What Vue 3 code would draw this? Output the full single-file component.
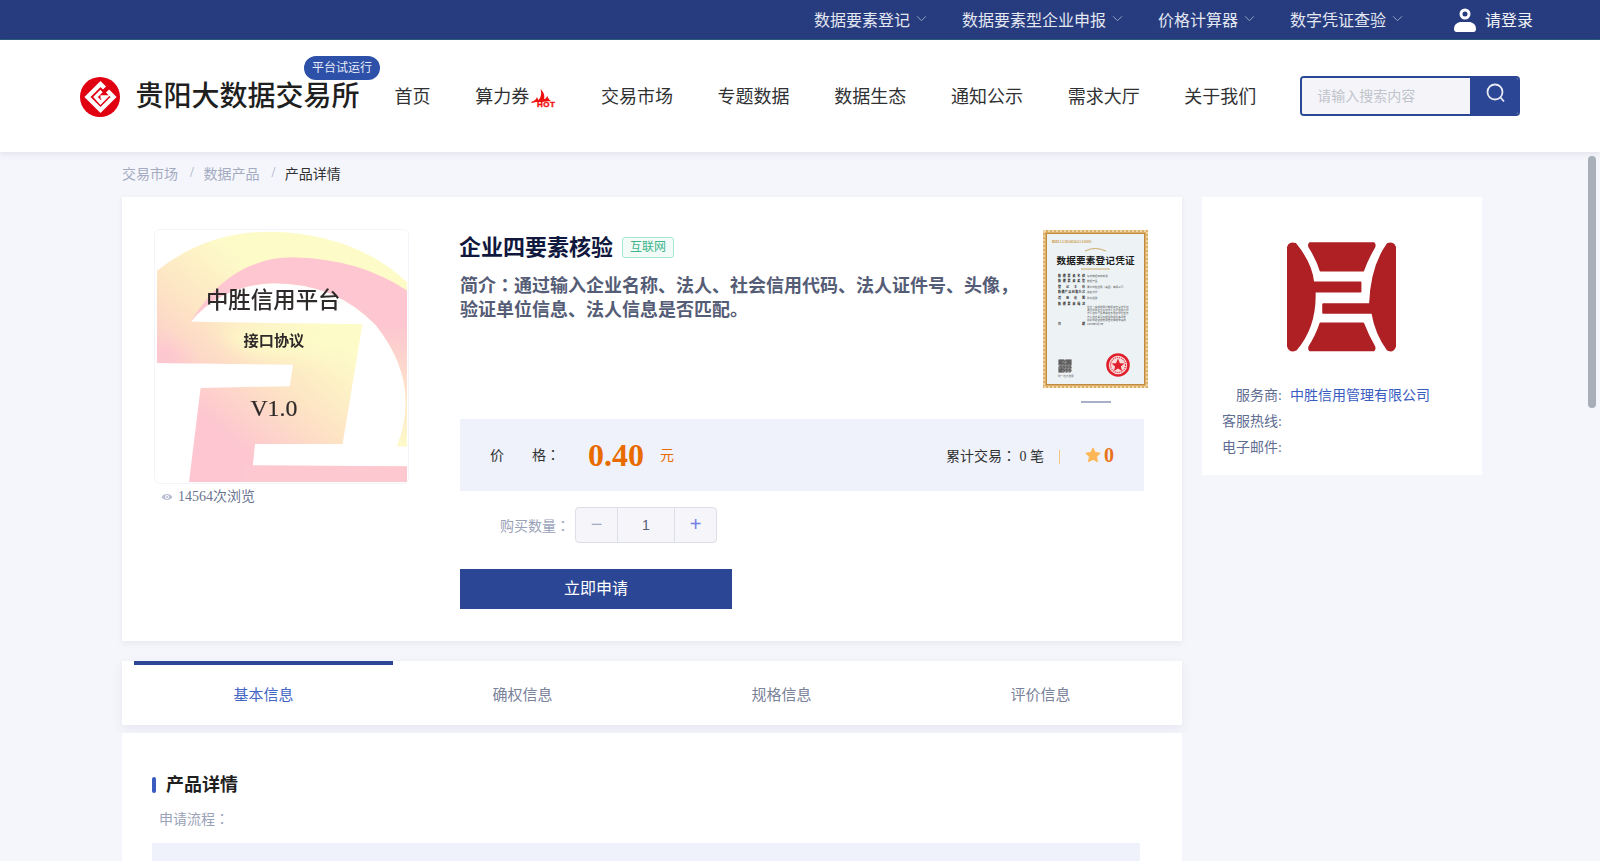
<template>
  <div class="page">
    <div class="top-bar">
      <div class="top-item" v-for="item in topLinks" :key="item">
        <span>{{ item }}</span>
        <svg class="chevron" viewBox="0 0 12 8" width="11" height="7">
          <path d="M1 1.5 L6 6.5 L11 1.5" fill="none" stroke="#9aa6c8" stroke-width="1.1" />
        </svg>
      </div>
      <div class="top-login">
        <svg viewBox="0 0 22 24" width="22" height="24">
          <circle cx="11" cy="6" r="4" fill="none" stroke="#fff" stroke-width="3" />
          <path d="M0 21 C0 16 4 14 7 14 L15 14 C18 14 22 16 22 21 C22 23 21 24 19.5 24 L2.5 24 C1 24 0 23 0 21 Z" fill="#fff" />
        </svg>
        <span>请登录</span>
      </div>
    </div>

    <header class="header">
      <div class="brand">
        <svg class="brand-logo" viewBox="0 0 40 40" width="40" height="40">
          <circle cx="20" cy="20" r="20" fill="#e00012" />
          <path d="M24.5 11 L20.5 7 L7.5 20 L20.5 33 L33.5 20 L27.5 14" fill="none" stroke="#fff" stroke-width="4.4" />
          <path d="M21.5 14 L15.5 20 L20.5 25.5 L26 20 L20.5 20" fill="none" stroke="#fff" stroke-width="3.4" />
        </svg>
        <span class="brand-name">贵阳大数据交易所</span>
        <span class="brand-badge">平台试运行</span>
      </div>
      <nav class="nav">
        <a class="nav-item" v-for="item in navLinks" :key="item">
          {{ item }}
          <svg v-if="item === '算力券'" class="hot" viewBox="0 0 26 21" width="26" height="21">
            <path d="M0 13 C3 12 5 11 6 8 C7 10 7 11 7.5 11 C9.5 9 11 5 9.5 0 C13 3 14 7 13 10 C15 10 16 8 16 6.5 C17 9 18 11 20 12 L11 13 L5 13 L1 14 Z" fill="#f01010" />
            <text x="6" y="18" class="hot-text">HOT</text>
          </svg>
        </a>
      </nav>
      <div class="search">
        <input class="search-input" placeholder="请输入搜索内容" />
        <div class="search-btn">
          <svg viewBox="0 0 22 22" width="22" height="22">
            <circle cx="10" cy="10" r="7.5" fill="none" stroke="#e6eaf4" stroke-width="1.8" />
            <path d="M15.5 15.5 L19 19.5" stroke="#e6eaf4" stroke-width="1.8" fill="none" />
          </svg>
        </div>
      </div>
    </header>

    <main class="content">
      <div class="breadcrumb">
        <span>交易市场</span><i>/</i><span>数据产品</span><i>/</i><span class="current">产品详情</span>
      </div>

      <div class="columns">
        <div class="left-col">
          <section class="card product">
            <div class="cover-col">
              <div class="cover">
                <svg viewBox="72 57 766 766" width="253" height="253">
                  <defs>
                    <linearGradient id="baseGrad" x1="0.1" y1="0.95" x2="0.75" y2="0.2">
                      <stop offset="0.22" stop-color="#fdc6d0" />
                      <stop offset="0.5" stop-color="#fde3c4" />
                      <stop offset="0.8" stop-color="#fdfbc8" />
                    </linearGradient>
                    <linearGradient id="ringGrad" x1="0" y1="0" x2="0" y2="1">
                      <stop offset="0.35" stop-color="#fdc6d0" />
                      <stop offset="1" stop-color="#fdfbc8" />
                    </linearGradient>
                    <clipPath id="markClip">
                      <path :d="markPath" />
                    </clipPath>
                    <filter id="soft" x="-50%" y="-50%" width="200%" height="200%"><feGaussianBlur stdDeviation="26" /></filter>
                  </defs>
                  <rect x="72" y="57" width="766" height="766" fill="#fff" />
                  <path :d="markPath" fill="url(#baseGrad)" />
                  <g clip-path="url(#markClip)">
                    <path d="M180 335 Q300 135 500 140 Q700 145 850 250 L850 720 L790 720 Q880 500 700 320 Z" fill="url(#ringGrad)" />
                    <path d="M60 380 L170 440 L140 480 L60 480 Z" fill="#fdc6d0" filter="url(#soft)" />
                    <path d="M260 360 L700 345 L620 440 L360 430 Z" fill="#fdfbc8" filter="url(#soft)" />
                    <rect x="340" y="768" width="500" height="56" fill="#fdc8d0" />
                  </g>
                  <text x="430" y="293" class="cover-h1">中胜信用平台</text>
                  <text x="432" y="408" class="cover-h2">接口协议</text>
                  <text x="432" y="620" class="cover-h3">V1.0</text>
                </svg>
              </div>
              <div class="views">
                <svg viewBox="0 0 12 8" width="12" height="8">
                  <path d="M0.5 4 C3 0 9 0 11.5 4 C9 8 3 8 0.5 4 Z" fill="#b8bfd2" />
                  <circle cx="6" cy="4" r="2" fill="#fff" />
                  <circle cx="6" cy="4" r="1.1" fill="#b8bfd2" />
                </svg>
                <span>14564次浏览</span>
              </div>
            </div>

            <div class="info-col">
              <div class="info-top">
                <div class="info-text">
                  <div class="title-row">
                    <h1 class="title">企业四要素核验</h1>
                    <span class="tag">互联网</span>
                  </div>
                  <p class="desc">简介<span class="colon">：</span>通过输入企业名称、法人、社会信用代码、法人证件号、头像，验证单位信息、法人信息是否匹配。</p>
                </div>
                <div class="cert-col">
                  <svg class="cert" viewBox="0 0 105 158" width="105" height="158">
                    <rect width="105" height="158" fill="#dcb06a" />
                    <rect x="1" y="1" width="103" height="156" fill="none" stroke="#f6e3bd" stroke-width="1.4" stroke-dasharray="2 2" />
                    <rect x="3" y="3" width="99" height="152" fill="#c08b3c" />
                    <rect x="4" y="4" width="97" height="150" fill="#edf3f5" />
                    <text x="9" y="13" class="cert-code">BDEX-1.2.156.96126.6.1.0.00000</text>
                    <path d="M42 21 Q52 16 63 21 M38 39 L67 39" stroke="#c9a45f" stroke-width="0.9" fill="none" />
                    <text x="52.5" y="34" class="cert-title" textLength="78">数据要素登记凭证</text>
                    <g v-for="row in certRows" :key="row.y">
                      <text x="15" :y="row.y" class="cert-label" textLength="27">{{ row.label }}</text>
                      <text x="44" :y="row.y" class="cert-value">{{ row.value }}</text>
                    </g>
                    <text v-for="(line, i) in certLines" :key="i" x="44" :y="78 + i * 3.2" class="cert-value">{{ line }}</text>
                    <rect x="15" y="129" width="14" height="14" fill="#fff" />
                    <rect v-for="cell in qrCells" :key="cell.key" :x="cell.x" :y="cell.y" width="1" height="1" fill="#1b1b1b" />
                    <text x="15" y="147" class="cert-value">统一社会信用</text>
                    <circle cx="75" cy="135" r="10.5" fill="#f7dcdc" stroke="#e0202c" stroke-width="2.6" />
                    <circle cx="75" cy="135" r="7.5" fill="none" stroke="#e0202c" stroke-width="1.2" stroke-dasharray="1 1" />
                    <path d="M75 128.5 L76.9 133.2 L81.5 133.4 L77.9 136.4 L79 141 L75 138.4 L71 141 L72.1 136.4 L68.5 133.4 L73.1 133.2 Z" fill="#e0202c" />
                  </svg>
                  <div class="cert-dot"></div>
                </div>
              </div>

              <div class="price-bar">
                <div class="price-left">
                  <span class="price-label"><span>价</span><span>格<span class="colon">：</span></span></span>
                  <span class="price-num">0.40</span>
                  <span class="price-unit">元</span>
                </div>
                <div class="price-right">
                  <span>累计交易<span class="colon">：</span> 0 笔</span>
                  <i class="price-sep"></i>
                  <svg viewBox="0 0 24 24" width="16" height="16">
                    <path d="M12 1.5 L15.3 8.3 L22.8 9.3 L17.3 14.5 L18.7 22 L12 18.4 L5.3 22 L6.7 14.5 L1.2 9.3 L8.7 8.3 Z" fill="#fdb654" stroke="#fdb654" stroke-width="1.5" stroke-linejoin="round" />
                  </svg>
                  <b class="score">0</b>
                </div>
              </div>

              <div class="qty-row">
                <span class="qty-label">购买数量<span class="colon">：</span></span>
                <div class="stepper">
                  <span class="step minus">−</span>
                  <span class="step-value">1</span>
                  <span class="step plus">+</span>
                </div>
              </div>

              <button class="apply"><span>立即申请</span></button>
            </div>
          </section>

          <div class="tabs">
            <div v-for="(tab, i) in tabs" :key="tab" class="tab" :class="{ active: i === 0 }">{{ tab }}</div>
          </div>

          <section class="card detail">
            <h2 class="detail-title">产品详情</h2>
            <div class="detail-sub">申请流程<span class="colon">：</span></div>
            <div class="detail-box"></div>
          </section>
        </div>

        <aside class="card provider">
          <svg class="provider-logo" viewBox="290 96 330 331" width="111" height="110">
            <g fill="#ae2024" stroke="#ae2024" stroke-width="6" stroke-linejoin="round">
              <path d="M294 112 Q298 96 316 102 Q364 160 370 218 L512 218 L512 245 L374 245 Q378 350 318 420 Q298 428 294 410 Z" />
              <path d="M616 112 Q612 96 594 102 Q545 170 541 283 L400 283 L400 309 L548 309 Q558 370 594 420 Q612 428 616 410 Z" />
              <path d="M360 100 L552 100 Q556 104 554 110 Q532 148 520 182 L392 182 Q382 148 358 110 Q356 104 360 100 Z" />
              <path d="M360 422 L552 422 Q556 418 554 412 Q534 378 520 341 L392 341 Q380 378 358 412 Q356 418 360 422 Z" />
            </g>
          </svg>
          <div class="provider-row"><span class="provider-key">服务商:</span><span class="provider-val">中胜信用管理有限公司</span></div>
          <div class="provider-row"><span class="provider-key">客服热线:</span></div>
          <div class="provider-row"><span class="provider-key">电子邮件:</span></div>
        </aside>
      </div>
    </main>

    <div class="scroll-thumb"></div>
  </div>
</template>

<script setup>
const topLinks = ['数据要素登记', '数据要素型企业申报', '价格计算器', '数字凭证查验']
const navLinks = ['首页', '算力券', '交易市场', '专题数据', '数据生态', '通知公示', '需求大厅', '关于我们']
const tabs = ['基本信息', '确权信息', '规格信息', '评价信息']

const markPath = 'M78 180 Q230 60 430 62 Q680 70 835 215 L835 712 L805 712 Q880 520 740 345 Q620 218 430 218 Q270 225 180 335 L700 342 L640 705 L375 705 L368 770 L835 772 L835 820 L175 820 L210 535 L480 530 L490 465 L78 460 Z'

const certRows = [
  { y: 47, label: '数据要素名称', value: '每日数据四向核验' },
  { y: 52, label: '数据要素类型', value: '数据产品' },
  { y: 58, label: '登记主体', value: '贵州中胜信用（集团）有限公司' },
  { y: 63, label: '数据产品获取方式', value: '授权访问' },
  { y: 69, label: '适用范围', value: '政务金融' },
  { y: 75, label: '数据要素描述', value: '' },
  { y: 95, label: '日期', value: '2025年6月7日' },
]
const certLines = [
  '企业一类核验用户数据来自官方登记',
  '通过提供企业名称法人社会信用代码',
  '法人证件号头像等信息验证单位信息',
  '法人信息是否匹配金融保险等场景',
  '并提供验证结果报告记录完整追溯',
]

// 假二维码，只求看起来像
const qrCells = []
for (let r = 0; r < 13; r++) {
  for (let c = 0; c < 13; c++) {
    const inFinder = (r < 4 && c < 4) || (r < 4 && c > 8) || (r > 8 && c < 4)
    const on = inFinder ? true : (r * 7 + c * 5 + r * c) % 3 !== 0
    if (on) qrCells.push({ key: r + '-' + c, x: 15.5 + c, y: 129.5 + r })
  }
}
</script>

<style>
html, body {
  margin: 0;
  height: 100%;
  overflow: hidden;
}
</style>

<style scoped>
.page {
  position: relative;
  height: 100vh;
  display: flex;
  flex-direction: column;
  background: #f5f6fb;
  font-family: "Liberation Serif", "Noto Sans CJK SC", serif;
  color: #303133;
}
.colon {
  font-family: "Noto Sans CJK JP", sans-serif;
  line-height: 0;
}

.top-bar {
  flex: none;
  height: 39px;
  box-sizing: content-box;
  border-bottom: 1px solid #2a5c7c;
  background: #273c7e;
  color: #e3e7f2;
  font-size: 16px;
  display: flex;
  align-items: center;
  justify-content: flex-end;
  padding-right: 67px;
}
.top-item {
  display: flex;
  align-items: center;
  gap: 6px;
  margin-right: 35px;
  padding-bottom: 2px;
}
.top-login {
  display: flex;
  align-items: center;
  gap: 9px;
  margin-left: 16px;
  color: #f2f4f9;
}
.top-login span {
  padding-bottom: 2px;
}

.header {
  flex: none;
  position: relative;
  z-index: 2;
  height: 112px;
  background: #fff;
  box-shadow: 0 2px 6px rgba(60, 70, 110, 0.1);
  display: flex;
  align-items: center;
  padding-left: 80px;
  box-sizing: border-box;
}
.brand {
  position: relative;
  display: flex;
  align-items: center;
  gap: 15.5px;
  margin-top: 2px;
}
.brand-logo {
  display: block;
}
.brand-name {
  font-size: 28px;
  font-weight: 500;
  color: #1f1f1f;
  line-height: 40px;
  white-space: nowrap;
}
.brand-badge {
  position: absolute;
  left: 224px;
  top: -21px;
  width: 76px;
  height: 24px;
  border-radius: 12px;
  background: #2d50a8;
  color: #e8ecf7;
  font-size: 12px;
  line-height: 24px;
  text-align: center;
}
.nav {
  display: flex;
  align-items: center;
  gap: 44.7px;
  margin-left: 35px;
  font-size: 18px;
  color: #303133;
  padding-bottom: 2px;
}
.nav-item {
  display: flex;
  align-items: center;
  white-space: nowrap;
}
.hot {
  margin: 8px -1px 0 2px;
}
.hot-text {
  font: 700 8px "Liberation Sans", sans-serif;
  letter-spacing: 0.5px;
  fill: #f01010;
  stroke: #f01010;
  stroke-width: 0.4px;
}
.search {
  margin-left: 44px;
  width: 220px;
  height: 40px;
  box-sizing: border-box;
  border: 2px solid #2b4694;
  border-radius: 4px;
  display: flex;
  overflow: hidden;
}
.search-input {
  flex: 1;
  min-width: 0;
  border: 0;
  outline: 0;
  background: #f5f5f9;
  padding: 2px 14px 0 15px;
  font: 14px "Liberation Serif", "Noto Sans CJK SC", serif;
}
.search-input::placeholder {
  color: #c0c4cc;
}
.search-btn {
  flex: none;
  width: 48px;
  background: #2b4694;
  display: flex;
  align-items: center;
  justify-content: center;
  padding: 0 0 6px 3px;
  box-sizing: border-box;
}

.content {
  flex: 1;
  overflow-y: auto;
  padding-left: 122px;
}
/* 截图里滚动条被隐藏，用一个块画出滑块 */
.scroll-thumb {
  position: absolute;
  z-index: 3;
  right: 4px;
  top: 156px;
  width: 8px;
  height: 252px;
  border-radius: 4px;
  background: #a8afb8;
}

.breadcrumb {
  height: 45px;
  box-sizing: border-box;
  padding-bottom: 3px;
  display: flex;
  align-items: center;
  font-size: 14px;
  color: #a3abc2;
}
.breadcrumb i {
  font-style: normal;
  margin: 0 9.5px 0 12px;
}
.breadcrumb .current {
  color: #303133;
}

.columns {
  display: flex;
  align-items: flex-start;
  gap: 20px;
}
.left-col {
  width: 1060px;
  flex: none;
}
.card {
  background: #fff;
  box-sizing: border-box;
}

.product {
  height: 444px;
  padding: 32px 38px 32px 32px;
  display: flex;
  gap: 51px;
  box-shadow: 0 2px 6px rgba(60, 70, 110, 0.08);
}
.cover-col {
  width: 255px;
  flex: none;
}
.cover {
  width: 255px;
  height: 255px;
  box-sizing: border-box;
  border: 1px solid #f3f3fa;
  border-radius: 6px;
  overflow: hidden;
}
.cover svg {
  display: block;
  filter: blur(0.3px);
}
.cover-h1 {
  font: 500 68px "Noto Sans CJK SC", sans-serif;
  text-anchor: middle;
  fill: #2e2a2a;
}
.cover-h2 {
  font: 700 46px "Noto Sans CJK SC", sans-serif;
  text-anchor: middle;
  fill: #2e2a2a;
}
.cover-h3 {
  font: 400 72px "Liberation Serif", serif;
  text-anchor: middle;
  fill: #2e2a2a;
  stroke: #2e2a2a;
  stroke-width: 0.6px;
}
.views {
  display: flex;
  align-items: center;
  gap: 5px;
  padding-left: 7px;
  margin-top: 3px;
  font-size: 14px;
  line-height: 20px;
  color: #6b7590;
}

.info-col {
  width: 684px;
  flex: none;
}
.info-top {
  height: 190px;
  display: flex;
  justify-content: space-between;
}
.info-text {
  width: 560px;
}
.title-row {
  display: flex;
  align-items: center;
  gap: 9px;
  height: 36px;
}
.title {
  margin: 0 0 0 -1px;
  padding-bottom: 4px;
  font-size: 22px;
  font-weight: 700;
  color: #10183d;
}
.tag {
  width: 52px;
  height: 21px;
  margin-top: 1px;
  box-sizing: border-box;
  border: 1px solid #a8e6cf;
  border-radius: 3px;
  background: #f2fbf8;
  color: #3bb58a;
  font-size: 12px;
  line-height: 18px;
  text-align: center;
}
.desc {
  margin: 9px 0 0;
  font-size: 18px;
  font-weight: 700;
  line-height: 24px;
  color: #555c75;
}
.cert-col {
  margin-right: -4px;
  margin-top: 1px;
  width: 105px;
  flex: none;
}
.cert {
  display: block;
}
.cert-code {
  font: 700 2.6px "Liberation Sans", sans-serif;
  fill: #c9963f;
}
.cert-title {
  font: 700 9.6px "Noto Sans CJK SC", sans-serif;
  text-anchor: middle;
  fill: #1c1c1c;
}
.cert-label {
  font: 700 3px "Noto Sans CJK SC", sans-serif;
  fill: #222;
}
.cert-value {
  font: 400 2.6px "Noto Sans CJK SC", sans-serif;
  fill: #555;
}
.cert-dot {
  width: 30px;
  height: 2px;
  margin: 13px auto 0;
  background: #a8b0c8;
}

.price-bar {
  height: 72px;
  background: #eff2fa;
  padding: 0 30px;
  display: flex;
  align-items: center;
  justify-content: space-between;
}
.price-left {
  display: flex;
  align-items: center;
}
.price-label {
  width: 98px;
  display: flex;
  gap: 28px;
  font-size: 14px;
  color: #303133;
  padding-bottom: 2px;
}
.price-num {
  font-size: 32px;
  font-weight: 700;
  line-height: 40px;
  color: #e96b00;
}
.price-unit {
  margin-left: 16px;
  padding-bottom: 2px;
  font-size: 14px;
  color: #e96b00;
}
.price-right {
  display: flex;
  align-items: center;
  font-size: 14px;
  color: #303133;
}
.price-sep {
  width: 1px;
  height: 14px;
  margin: 4px 25px 0 15px;
  background: #f5c77e;
}
.score {
  margin-left: 3px;
  font-size: 20px;
  color: #e9731a;
}

.qty-row {
  display: flex;
  align-items: center;
  margin: 16px 0 0 40px;
}
.qty-label {
  width: 75px;
  font-size: 14px;
  color: #9aa2b8;
}
.stepper {
  width: 142px;
  height: 36px;
  box-sizing: border-box;
  border: 1px solid #dcdfe6;
  border-radius: 4px;
  background: #f6f6fa;
  display: flex;
  align-items: center;
}
.step {
  width: 41px;
  height: 34px;
  text-align: center;
  font: 20px/32px "Liberation Sans", sans-serif;
}
.minus {
  border-right: 1px solid #dcdfe6;
  color: #a4abbf;
}
.plus {
  border-left: 1px solid #dcdfe6;
  color: #6f80e6;
}
.step-value {
  flex: 1;
  text-align: center;
  font: 14px "Liberation Sans", sans-serif;
  color: #555c75;
}
.apply {
  display: block;
  width: 272px;
  height: 40px;
  margin-top: 26px;
  padding: 0 0 4px;
  border: 0;
  background: #2b4694;
  color: #fff;
  font: 16px "Liberation Serif", "Noto Sans CJK SC", serif;
}

.tabs {
  margin-top: 20px;
  height: 64px;
  padding-left: 12px;
  background: #fff;
  box-shadow: 0 4px 10px rgba(60, 70, 110, 0.08);
  display: flex;
}
.tab {
  width: 259px;
  box-sizing: border-box;
  border-top: 4px solid transparent;
  padding-bottom: 3px;
  display: flex;
  align-items: center;
  justify-content: center;
  font-size: 15px;
  color: #7a8299;
}
.tab.active {
  border-top-color: #2b4694;
  color: #4466c4;
}

.detail {
  margin-top: 8px;
  padding: 38px 42px 0 30px;
  height: 1404px;
}
.detail-title {
  margin: 0;
  position: relative;
  padding: 1px 0 0 14px;
  height: 26px;
  box-sizing: border-box;
  font-size: 18px;
  font-weight: 700;
  line-height: 26px;
  color: #1f1f1f;
}
.detail-title::before {
  content: '';
  position: absolute;
  left: 0;
  top: 6px;
  width: 4px;
  height: 16px;
  border-radius: 2px;
  background: #3a5bbf;
}
.detail-sub {
  margin: 13px 0 13px 7px;
  font-size: 14px;
  line-height: 20px;
  color: #9aa2b8;
}
.detail-box {
  width: 988px;
  height: 300px;
  background: #eff2fa;
}

.provider {
  width: 280px;
  height: 278px;
  flex: none;
  padding-top: 45px;
}
.provider-logo {
  display: block;
  margin: 0 0 31px 84px;
}
.provider-row {
  display: flex;
  gap: 8px;
  font-size: 14px;
  line-height: 26px;
}
.provider-key {
  width: 80px;
  text-align: right;
  color: #5f6d92;
  flex: none;
}
.provider-val {
  color: #3a5bbf;
  white-space: nowrap;
}
</style>
